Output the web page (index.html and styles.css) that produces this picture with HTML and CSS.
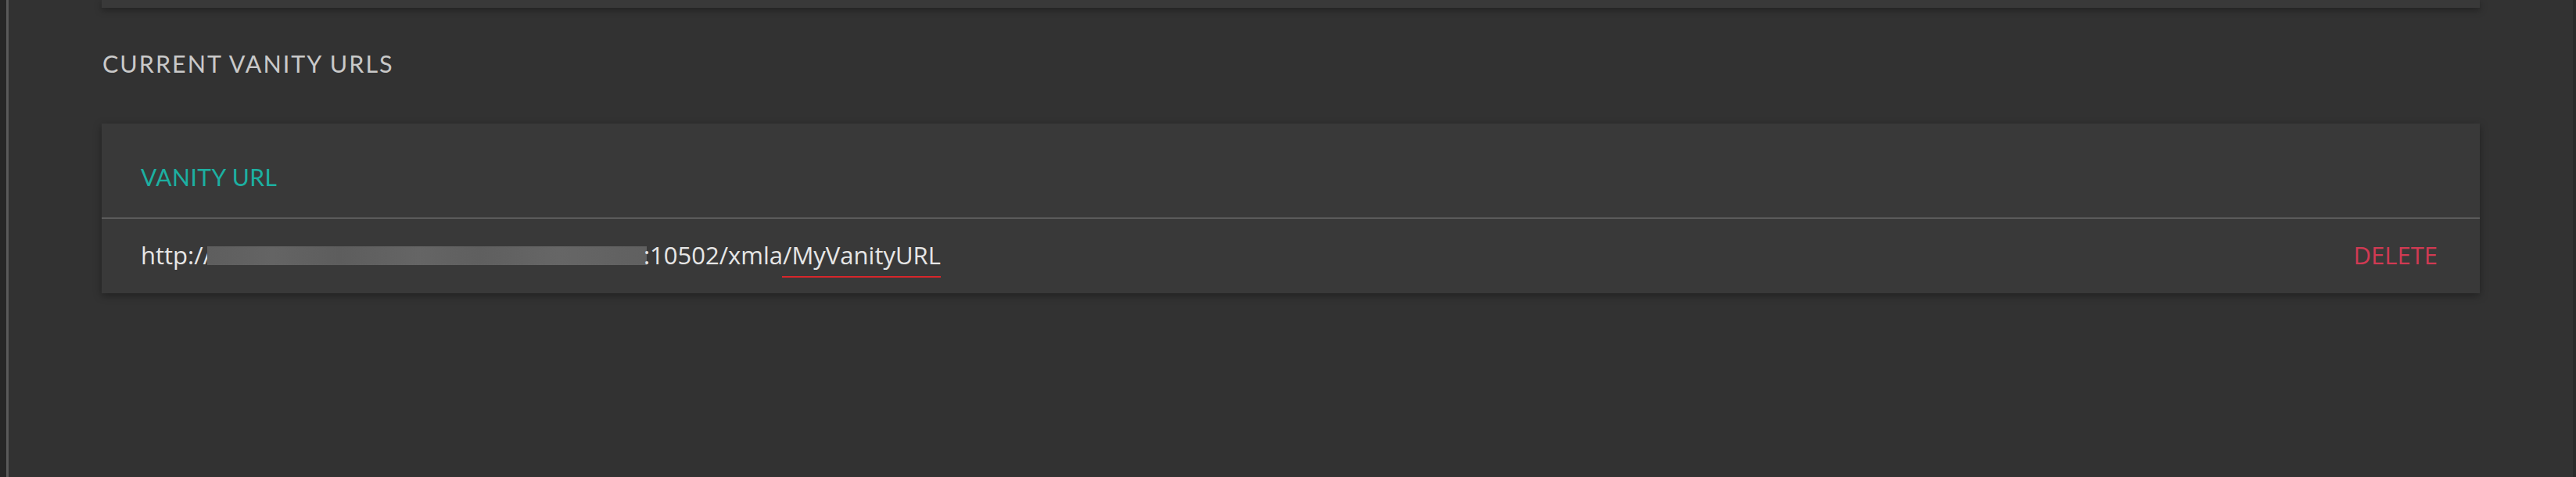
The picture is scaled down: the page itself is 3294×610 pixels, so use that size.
FILE: index.html
```html
<!DOCTYPE html>
<html lang="en">
<head>
  <meta charset="UTF-8">
  <title>Vanity URLs</title>
  <link rel="stylesheet" href="styles.css">
</head>
<body>
  <div class="app">
    <div class="sidebar-edge"></div>

    <div class="content">
      <div class="card card-top"></div>

      <div class="section-title">CURRENT VANITY URLS</div>

      <div class="card card-list">
        <div class="card-head">VANITY URL</div>
        <div class="url-row">
          <div class="url">
            <span>http://</span><span class="redacted" aria-hidden="true"></span><span>:10502/xmla/</span><span class="misspelled">MyVanityURL</span>
          </div>
          <a class="delete" href="#">DELETE</a>
        </div>
      </div>
    </div>

    <div class="scroll-edge"></div>
  </div>
</body>
</html>
```

FILE: styles.css
```css
html, body {
  margin: 0;
  height: 100%;
  background-color: #323232;
  overflow: hidden;
}
.app {
  display: flex;
  height: 610px;
}
.sidebar-edge {
  width: 8px;
  background: #272727;
  border-right: 3px solid #5a5a5a;
  flex-shrink: 0;
}
.scroll-edge {
  width: 4px;
  background: #2a2a2a;
  flex-shrink: 0;
}
.content {
  flex: 1;
  padding: 0 119px;
}
.card {
  background: #393939;
  box-shadow: 0 3px 10px rgba(0, 0, 0, 0.35);
}
.card-top {
  height: 10px;
}
.section-title {
  font-family: Lato, "Liberation Sans", sans-serif;
  font-size: 30.5px;
  letter-spacing: 2px;
  color: #c9c9c9;
  margin: 51px 0 0 1px;
  line-height: 40px;
}
.card-list {
  margin-top: 57px;
}
.card-head {
  height: 122px;
  box-sizing: border-box;
  display: flex;
  align-items: center;
  padding: 16px 43px 0 50px;
  font-family: Lato, "Liberation Sans", sans-serif;
  font-size: 30px;
  letter-spacing: 0.5px;
  color: #1cb0a1;
  border-bottom: 2px solid #5b5b5b;
}
.url-row {
  height: 95px;
  display: flex;
  align-items: center;
  justify-content: space-between;
  padding: 0 54px 4px 50px;
  box-sizing: border-box;
  font-family: "Open Sans", sans-serif;
  font-size: 31px;
  color: #e6e6e6;
}
.url {
  display: flex;
  align-items: center;
}
/* blurred-out host name */
.redacted {
  display: inline-block;
  width: 562px;
  height: 24px;
  margin: 2px 0 0 -6px;
  background: linear-gradient(90deg, #5e5e5e 0%, #646464 15%, #5d5d5d 30%, #656565 48%, #5f5f5f 62%, #666666 80%, #606060 100%);
}
.url span:nth-child(3) {
  margin-left: -4px;
}
.misspelled {
  border-bottom: 2px solid #d7262b;
  padding: 0 0 6px 12px;
  margin: 0 0 -8px -12px;
}
.delete {
  font-family: "Open Sans", sans-serif;
  color: #d13a53;
  text-decoration: none;
  font-size: 31px;
}
```
